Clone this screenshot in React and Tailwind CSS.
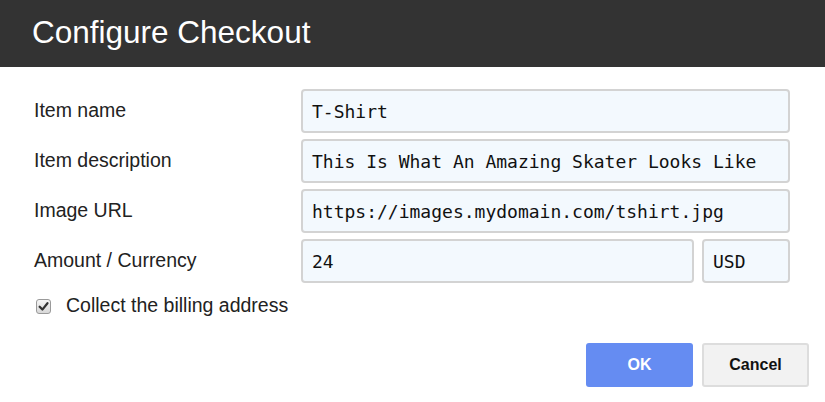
import React from "react";

const sans = { fontFamily: '"Liberation Sans", Arial, sans-serif' };
const mono = { fontFamily: '"DejaVu Sans Mono", "Liberation Mono", monospace' };

function Field({ value, className = "" }) {
  return (
    <div
      className={
        "h-[44px] flex items-center rounded-[4px] border-2 border-[#d3d3d3] bg-[#f3f9fe] pl-[9px] text-[18px] text-[#111] " +
        className
      }
      style={mono}
    >
      {value}
    </div>
  );
}

function Row({ label, children }) {
  return (
    <div className="flex items-center h-[44px]">
      <div className="w-[267px] shrink-0 text-[19.5px] text-[#222]">{label}</div>
      <div className="flex-1 flex gap-[8px]">{children}</div>
    </div>
  );
}

export default function App() {
  return (
    <div className="w-[825px] h-[402px] bg-white overflow-hidden" style={sans}>
      <div className="h-[67px] bg-[#333333] flex items-center px-[32px]">
        <h1 className="text-[31.5px] text-white leading-none -mt-[1px]">Configure Checkout</h1>
      </div>
      <div className="pl-[34px] pr-[35px] pt-[22px] flex flex-col gap-[6px]">
        <Row label="Item name">
          <Field value="T-Shirt" className="flex-1" />
        </Row>
        <Row label="Item description">
          <Field value="This Is What An Amazing Skater Looks Like" className="flex-1" />
        </Row>
        <Row label="Image URL">
          <Field value="https://images.mydomain.com/tshirt.jpg" className="flex-1" />
        </Row>
        <Row label="Amount / Currency">
          <Field value="24" className="flex-1" />
          <Field value="USD" className="w-[88px]" />
        </Row>
      </div>
      <div className="pl-[36px] mt-[10px] h-[26px] flex items-center">
        <span className="w-[15px] h-[15px] rounded-[3px] border border-[#9a9a9a] bg-gradient-to-b from-[#f6f6f6] to-[#d8d8d8] flex items-center justify-center">
          <svg width="11" height="11" viewBox="0 0 10 10">
            <path d="M1.5 5.2 L4 7.8 L8.6 2" fill="none" stroke="#333" strokeWidth="2" strokeLinecap="round" strokeLinejoin="round" />
          </svg>
        </span>
        <span className="ml-[15px] text-[19.5px] text-[#222]">Collect the billing address</span>
      </div>
      <div className="mt-[24px] pr-[16px] flex justify-end gap-[9px]">
        <button className="w-[107px] h-[44px] rounded-[3px] bg-[#658cf2] text-white font-bold text-[16px]">
          OK
        </button>
        <button className="w-[107px] h-[44px] rounded-[3px] bg-[#f2f2f2] border-2 border-[#dddddd] text-[#111] font-bold text-[16px]">
          Cancel
        </button>
      </div>
    </div>
  );
}
